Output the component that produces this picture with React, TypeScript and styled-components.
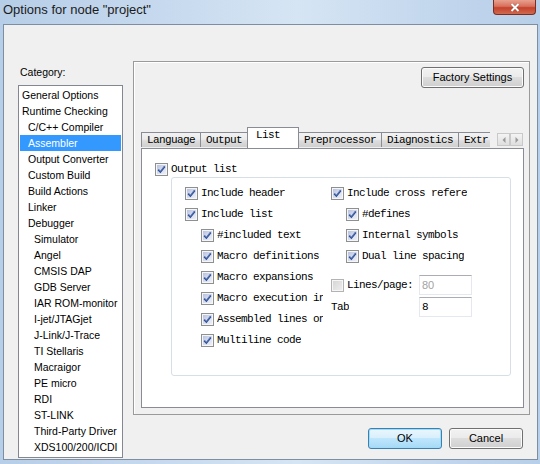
import React from "react";
import styled, { createGlobalStyle } from "styled-components";

const GlobalStyle = createGlobalStyle`
  html, body {
    margin: 0;
    padding: 0;
  }
  body {
    width: 540px;
    height: 464px;
    overflow: hidden;
    font-family: "Liberation Sans", Arial, sans-serif;
  }
`;

const Frame = styled.div`
  width: 540px;
  height: 464px;
  box-sizing: border-box;
  display: flex;
  flex-direction: column;
  background: linear-gradient(90deg, #b7cee8 0%, #c6d9ee 30%, #d6e5f4 55%, #c3d7ed 80%, #b8cfe9 100%);
`;

const TitleBar = styled.div`
  height: 24px;
  display: flex;
  justify-content: space-between;
  align-items: flex-start;
  padding: 0 4px 0 3px;
`;

const TitleText = styled.span`
  font-family: "Liberation Sans", Arial, sans-serif;
  font-size: 13px;
  line-height: 20px;
  color: #1b1b1b;
`;

const CloseButton = styled.div`
  width: 43px;
  height: 15px;
  box-sizing: border-box;
  border: 1px solid #7b2d22;
  border-top: none;
  border-radius: 0 0 4px 4px;
  background: linear-gradient(180deg, #e9a08f 0%, #d8705c 45%, #c4422c 55%, #cf6a4f 100%);
  display: flex;
  align-items: center;
  justify-content: center;
`;

const Client = styled.div`
  height: 436px;
  margin: 0 2px 0 3px;
  box-sizing: border-box;
  border: 1px solid #7d8ea2;
  background: #f0f0f0;
  display: flex;
`;

const LeftPane = styled.div`
  width: 129px;
  padding: 40px 0 0 14px;
  box-sizing: border-box;
  display: flex;
  flex-direction: column;
`;

const CategoryLabel = styled.div`
  font-size: 10.5px;
  line-height: 14px;
  height: 14px;
  margin: 0 0 6px 2px;
  color: #000;
`;

const ListBox = styled.div`
  width: 105px;
  height: 373px;
  box-sizing: border-box;
  border: 1px solid #828790;
  background: #fff;
  padding: 1px;
  display: flex;
  flex-direction: column;
`;

const ListItem = styled.div<{ $level: number; $selected?: boolean }>`
  height: 16px;
  line-height: 16px;
  font-size: 10.5px;
  white-space: nowrap;
  overflow: hidden;
  padding-left: ${(p) => 2 + p.$level * 6}px;
  background: ${(p) => (p.$selected ? "#3399ff" : "transparent")};
  color: ${(p) => (p.$selected ? "#fff" : "#000")};
`;

const RightPane = styled.div`
  flex: 1;
  padding-top: 36px;
  display: flex;
  flex-direction: column;
`;

const GroupFrame = styled.div`
  width: 397px;
  height: 354px;
  box-sizing: border-box;
  border: 1px solid #9a9a9a;
  box-shadow: inset 1px 1px 0 #ffffff;
  display: flex;
  flex-direction: column;
  padding: 5px 5px 6px 7px;
`;

const FactoryRow = styled.div`
  display: flex;
  justify-content: flex-end;
`;

const PushButton = styled.div<{ $width: number; $default?: boolean }>`
  width: ${(p) => p.$width}px;
  height: 21px;
  box-sizing: border-box;
  border: 1px solid ${(p) => (p.$default ? "#3c7fb1" : "#707070")};
  border-radius: 3px;
  background: ${(p) =>
    p.$default
      ? "linear-gradient(180deg, #eaf6fd 0%, #d9f0fc 45%, #bee6fd 50%, #a7d9f5 100%)"
      : "linear-gradient(180deg, #f2f2f2 0%, #ebebeb 45%, #dddddd 50%, #cfcfcf 100%)"};
  box-shadow: inset 0 0 0 1px ${(p) => (p.$default ? "#9fdcf7" : "#fbfbfb")};
  font-size: 11px;
  line-height: 19px;
  text-align: center;
  color: #000;
`;

const TabControl = styled.div`
  margin-top: 40px;
  flex: 1;
  display: flex;
  flex-direction: column;
`;

const TabStrip = styled.div`
  height: 20px;
  display: flex;
  align-items: flex-end;
`;

const TabViewport = styled.div`
  width: 349px;
  height: 21px;
  overflow: hidden;
  display: flex;
  align-items: flex-start;
  padding-left: 1px;
  box-sizing: border-box;
`;

const mono = `"Liberation Mono", "Courier New", monospace`;

const Tab = styled.div<{ $width: number; $selected?: boolean }>`
  flex: none;
  width: ${(p) => p.$width}px;
  height: ${(p) => (p.$selected ? 21 : 15)}px;
  margin-top: ${(p) => (p.$selected ? 0 : 5)}px;
  margin-left: -1px;
  box-sizing: border-box;
  border: 1px solid #898c95;
  border-bottom: none;
  background: ${(p) =>
    p.$selected ? "#ffffff" : "linear-gradient(180deg, #f2f2f2 0%, #ebebeb 45%, #dddddd 55%, #cfcfcf 100%)"};
  position: relative;
  z-index: ${(p) => (p.$selected ? 2 : 0)};
  font-family: ${mono};
  font-size: 11px;
  letter-spacing: -0.6px;
  line-height: ${(p) => (p.$selected ? 15 : 14)}px;
  padding-left: ${(p) => (p.$selected ? 8 : 5)}px;
  white-space: nowrap;
  color: #000;
`;

const ScrollArrows = styled.div`
  display: flex;
  align-self: flex-start;
  margin: 5px 0 0 7px;
`;

const ArrowButton = styled.div`
  width: 13px;
  height: 13px;
  box-sizing: border-box;
  border: 1px solid #c9c9c9;
  background: linear-gradient(180deg, #f4f4f4, #dedede);
  display: flex;
  align-items: center;
  justify-content: center;
`;

const TabPage = styled.div`
  flex: 1;
  box-sizing: border-box;
  border: 1px solid #898c95;
  background: #fff;
  position: relative;
  z-index: 1;
  display: flex;
  flex-direction: column;
  padding: 14px 0 0 13px;
`;

const CheckRow = styled.div<{ $indent?: number; $height?: number }>`
  display: flex;
  align-items: center;
  height: ${(p) => p.$height ?? 21}px;
  padding-left: ${(p) => p.$indent ?? 0}px;
  flex: none;
`;

const BoxOuter = styled.span<{ $disabled?: boolean }>`
  width: 13px;
  height: 13px;
  box-sizing: border-box;
  flex: none;
  border: 1px solid ${(p) => (p.$disabled ? "#b3b3b3" : "#8e8f8f")};
  box-shadow: inset 0 0 0 1px #f6f6f6;
  background: ${(p) =>
    p.$disabled
      ? "linear-gradient(135deg, #d4d4d4 0%, #efefef 100%)"
      : "linear-gradient(135deg, #b1bcdc 0%, #d9dff0 55%, #f2f4fa 100%)"};
  display: flex;
  align-items: center;
  justify-content: center;
`;

const Label = styled.span<{ $max?: number; $gap?: number }>`
  font-family: ${mono};
  font-size: 11px;
  letter-spacing: -0.6px;
  white-space: nowrap;
  overflow: hidden;
  margin-left: ${(p) => p.$gap ?? 3}px;
  max-width: ${(p) => (p.$max ? `${p.$max}px` : "none")};
  color: #000;
  line-height: 13px;
`;

const OptionsGroup = styled.div`
  width: 340px;
  height: 199px;
  margin: 1px 0 0 16px;
  box-sizing: border-box;
  border: 1px solid #d5dfe5;
  border-radius: 3px;
  display: flex;
  padding: 5px 0 0 13px;
`;

const Column = styled.div<{ $width?: number }>`
  width: ${(p) => (p.$width ? `${p.$width}px` : "auto")};
  display: flex;
  flex-direction: column;
`;

const FieldRow = styled.div<{ $top: number }>`
  display: flex;
  align-items: center;
  height: 20px;
  margin-top: ${(p) => p.$top}px;
`;

const FieldLead = styled.div`
  width: 88px;
  display: flex;
  align-items: center;
`;

const TextInput = styled.div<{ $disabled?: boolean }>`
  width: 53px;
  height: 20px;
  box-sizing: border-box;
  border: 1px solid #e3e9ef;
  border-top-color: #abadb3;
  background: #fff;
  padding-left: 2px;
  font-family: ${(p) => (p.$disabled ? `"Liberation Sans", Arial, sans-serif` : mono)};
  font-size: 11px;
  line-height: 18px;
  color: ${(p) => (p.$disabled ? "#a3a3a3" : "#000")};
`;

const ButtonRow = styled.div`
  display: flex;
  justify-content: flex-end;
  gap: 7px;
  margin-top: 13px;
  padding-right: 14px;
`;

const Checkbox: React.FC<{ checked?: boolean; disabled?: boolean }> = ({ checked = true, disabled }) => (
  <BoxOuter $disabled={disabled}>
    {checked && (
      <svg width="9" height="9" viewBox="0 0 9 9">
        <path d="M1.2 4.6 L3.4 7 L7.8 1.4" fill="none" stroke="#2d4d92" strokeWidth="1.7" />
        <path d="M1.6 4.4 L3.4 6.3 L7.3 1.4" fill="none" stroke="#8fa7dc" strokeWidth="0.5" />
      </svg>
    )}
  </BoxOuter>
);

type Option = { label: string; indent: number; max?: number };

const leftOptions: Option[] = [
  { label: "Include header", indent: 0 },
  { label: "Include list", indent: 0 },
  { label: "#included text", indent: 16 },
  { label: "Macro definitions", indent: 16 },
  { label: "Macro expansions", indent: 16 },
  { label: "Macro execution info", indent: 16, max: 106 },
  { label: "Assembled lines only", indent: 16, max: 106 },
  { label: "Multiline code", indent: 16 },
];

const rightOptions: Option[] = [
  { label: "Include cross reference", indent: 0, max: 120 },
  { label: "#defines", indent: 15 },
  { label: "Internal symbols", indent: 15 },
  { label: "Dual line spacing", indent: 15 },
];

const categories: [string, number][] = [
  ["General Options", 0],
  ["Runtime Checking", 0],
  ["C/C++ Compiler", 1],
  ["Assembler", 1],
  ["Output Converter", 1],
  ["Custom Build", 1],
  ["Build Actions", 1],
  ["Linker", 1],
  ["Debugger", 1],
  ["Simulator", 2],
  ["Angel", 2],
  ["CMSIS DAP", 2],
  ["GDB Server", 2],
  ["IAR ROM-monitor", 2],
  ["I-jet/JTAGjet", 2],
  ["J-Link/J-Trace", 2],
  ["TI Stellaris", 2],
  ["Macraigor", 2],
  ["PE micro", 2],
  ["RDI", 2],
  ["ST-LINK", 2],
  ["Third-Party Driver", 2],
  ["XDS100/200/ICDI", 2],
];

// the last tab is cut by the scroll arrows, as in the dialog
const tabs: [string, number][] = [
  ["Language", 60],
  ["Output", 48],
  ["List", 52],
  ["Preprocessor", 84],
  ["Diagnostics", 78],
  ["Extr", 80],
];

export default function App() {
  return (
    <>
      <GlobalStyle />
      <Frame>
        <TitleBar>
          <TitleText>Options for node "project"</TitleText>
          <CloseButton>
            <svg width="10" height="9" viewBox="0 0 10 9">
              <path d="M1.5 1 L8.5 8 M8.5 1 L1.5 8" stroke="#5a1a10" strokeWidth="3" strokeOpacity="0.35" />
              <path d="M1.5 1 L8.5 8 M8.5 1 L1.5 8" stroke="#ffffff" strokeWidth="2" />
            </svg>
          </CloseButton>
        </TitleBar>
        <Client>
          <LeftPane>
            <CategoryLabel>Category:</CategoryLabel>
            <ListBox>
              {categories.map(([name, level]) => (
                <ListItem key={name} $level={level} $selected={name === "Assembler"}>
                  {name}
                </ListItem>
              ))}
            </ListBox>
          </LeftPane>
          <RightPane>
            <GroupFrame>
              <FactoryRow>
                <PushButton $width={103}>Factory Settings</PushButton>
              </FactoryRow>
              <TabControl>
                <TabStrip>
                  <TabViewport>
                    {tabs.map(([name, w]) => (
                      <Tab key={name} $width={w} $selected={name === "List"}>
                        {name}
                      </Tab>
                    ))}
                  </TabViewport>
                  <ScrollArrows>
                    <ArrowButton>
                      <svg width="4" height="6" viewBox="0 0 4 6">
                        <path d="M3.5 0 L0.5 3 L3.5 6 Z" fill="#9a9a9a" />
                      </svg>
                    </ArrowButton>
                    <ArrowButton>
                      <svg width="4" height="6" viewBox="0 0 4 6">
                        <path d="M0.5 0 L3.5 3 L0.5 6 Z" fill="#9a9a9a" />
                      </svg>
                    </ArrowButton>
                  </ScrollArrows>
                </TabStrip>
                <TabPage>
                  <CheckRow $height={13}>
                    <Checkbox />
                    <Label>Output list</Label>
                  </CheckRow>
                  <OptionsGroup>
                    <Column $width={146}>
                      {leftOptions.map((o) => (
                        <CheckRow key={o.label} $indent={o.indent}>
                          <Checkbox />
                          <Label $max={o.max}>{o.label}</Label>
                        </CheckRow>
                      ))}
                    </Column>
                    <Column>
                      {rightOptions.map((o) => (
                        <CheckRow key={o.label} $indent={o.indent}>
                          <Checkbox />
                          <Label $max={o.max}>{o.label}</Label>
                        </CheckRow>
                      ))}
                      <FieldRow $top={8}>
                        <FieldLead>
                          <Checkbox checked={false} disabled />
                          <Label>Lines/page:</Label>
                        </FieldLead>
                        <TextInput $disabled>80</TextInput>
                      </FieldRow>
                      <FieldRow $top={2}>
                        <FieldLead>
                          <Label $gap={0}>Tab</Label>
                        </FieldLead>
                        <TextInput>8</TextInput>
                      </FieldRow>
                    </Column>
                  </OptionsGroup>
                </TabPage>
              </TabControl>
            </GroupFrame>
            <ButtonRow>
              <PushButton $width={74} $default>
                OK
              </PushButton>
              <PushButton $width={74}>Cancel</PushButton>
            </ButtonRow>
          </RightPane>
        </Client>
      </Frame>
    </>
  );
}
